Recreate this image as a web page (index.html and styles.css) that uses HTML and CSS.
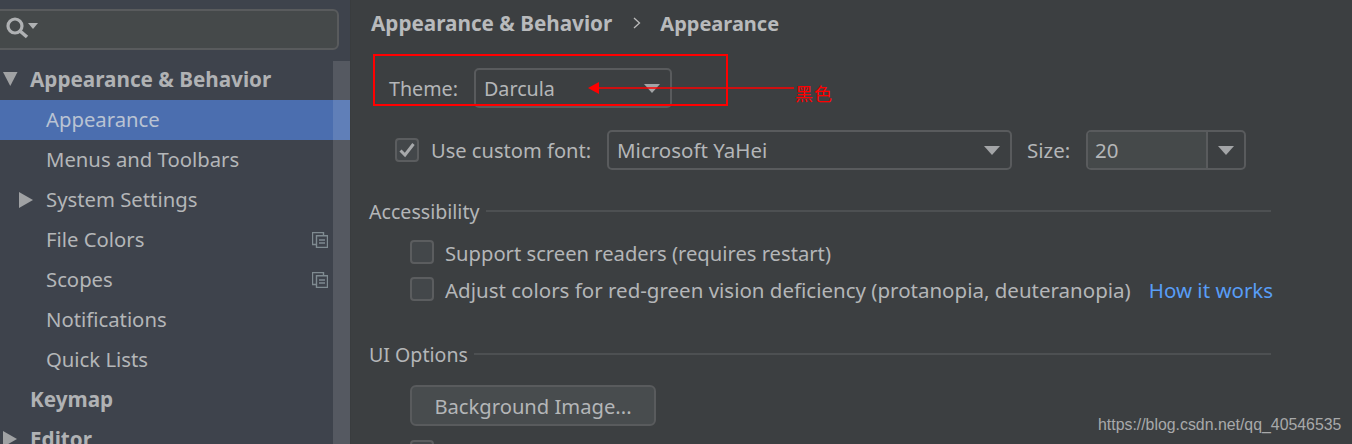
FILE: index.html
```html
<!DOCTYPE html>
<html lang="en">
<head>
<meta charset="utf-8">
<title>Settings</title>
<link rel="stylesheet" href="styles.css">
</head>
<body>
<div class="app">
  <aside class="sidebar">
    <div class="search">
      <svg class="search-icon" width="36" height="24" viewBox="0 0 36 24"><circle cx="12" cy="11" r="7" fill="none" stroke="#afb1b3" stroke-width="3.200"/><path d="M17 16l7 6" stroke="#afb1b3" stroke-width="3.600" fill="none"/><path d="M25 8h10l-5 6z" fill="#afb1b3"/></svg>
    </div>
    <div class="tree-wrap">
      <ul class="tree">
        <li class="row top"><svg class="arrow" width="16" height="14" viewBox="0 0 16 14"><path d="M1 0h14.500l-7.250 14z" fill="#a0a2a4"/></svg><span>Appearance &amp; Behavior</span></li>
        <li class="row sub selected"><span>Appearance</span></li>
        <li class="row sub"><span>Menus and Toolbars</span></li>
        <li class="row sub"><svg class="arrow-sub" width="14" height="16" viewBox="0 0 14 16"><path d="M0 0l14 8-14 8z" fill="#a0a2a4"/></svg><span>System Settings</span></li>
        <li class="row sub"><span>File Colors</span><svg class="copy" width="16" height="16" viewBox="0 0 16 16"><path d="M4.500 12.500H.5V.5h11v3" fill="none" stroke="#7f8b91" stroke-width="1.400"/><path d="M4.500 3.800h11v11.700h-11z" fill="none" stroke="#7f8b91" stroke-width="1.400"/><path d="M7 8h6M7 11h6" stroke="#7f8b91" stroke-width="1.400"/></svg></li>
        <li class="row sub"><span>Scopes</span><svg class="copy" width="16" height="16" viewBox="0 0 16 16"><path d="M4.500 12.500H.5V.5h11v3" fill="none" stroke="#7f8b91" stroke-width="1.400"/><path d="M4.500 3.800h11v11.700h-11z" fill="none" stroke="#7f8b91" stroke-width="1.400"/><path d="M7 8h6M7 11h6" stroke="#7f8b91" stroke-width="1.400"/></svg></li>
        <li class="row sub"><span>Notifications</span></li>
        <li class="row sub"><span>Quick Lists</span></li>
        <li class="row top"><span class="no-arrow">Keymap</span></li>
        <li class="row top"><svg class="arrow" width="14" height="16" viewBox="0 0 14 16"><path d="M0 0l14 8-14 8z" fill="#a0a2a4"/></svg><span>Editor</span></li>
      </ul>
      <div class="scrollbar"></div>
    </div>
  </aside>
  <main class="content">
    <h1 class="crumbs"><span>Appearance &amp; Behavior</span><svg class="chev" width="8" height="12" viewBox="0 0 8 12"><path d="M1 1l5.500 5L1 11" fill="none" stroke="#bbb" stroke-width="1.300"/></svg><span class="crumb-last">Appearance</span></h1>

    <div class="theme-row">
      <label class="label theme-label">Theme:</label>
      <div class="combo theme-combo"><span>Darcula</span><i class="caret"></i></div>
    </div>

    <div class="font-row">
      <span class="check checked"><svg width="18" height="16" viewBox="0 0 18 16"><path d="M2.500 8.500l4.500 4.500L15.500 2" fill="none" stroke="#a7a9ab" stroke-width="3"/></svg></span>
      <label class="label font-label">Use custom font:</label>
      <div class="combo font-combo"><span>Microsoft YaHei</span><i class="caret"></i></div>
      <label class="label size-label">Size:</label>
      <div class="size-combo"><span class="size-value">20</span><span class="size-btn"><i class="caret"></i></span></div>
    </div>

    <div class="group access"><span>Accessibility</span><hr></div>
    <div class="opt first"><span class="check"></span><span class="opt-text">Support screen readers (requires restart)</span></div>
    <div class="opt second"><span class="check"></span><span class="opt-text">Adjust colors for red-green vision deficiency (protanopia, deuteranopia)</span><a class="link opt-text">How it works</a></div>

    <div class="group ui"><span>UI Options</span><hr></div>
    <button class="btn">Background Image...</button>
    <div class="opt third"><span class="check"></span></div>
  </main>
</div>

<div class="mark-box"></div>
<svg class="mark-arrow" width="206" height="14" viewBox="0 0 206 14"><path d="M0 7l11-6v12z" fill="#f00"/><path d="M8 7h198" stroke="#f00" stroke-width="1.400"/></svg>
<span class="mark-text">黑色</span>
<span class="watermark">https://blog.csdn.net/qq_40546535</span>
</body>
</html>
```
FILE: styles.css
```css
* { box-sizing: border-box; }
html, body { margin: 0; height: 444px; overflow: hidden; }
body { background: #3c3f41; color: #b4b6b8; font-family: "Noto Sans", "Open Sans", sans-serif; font-size: 20.5px; position: relative; }

.app { display: flex; height: 444px; overflow: hidden; }

/* Sidebar */
.sidebar { width: 351px; flex: none; background: #3e434c; display: flex; flex-direction: column; overflow: hidden; border-right: 1px solid #393c3e; }
.search { height: 41px; margin: 9px 11px 10px -6px; background: #45494a; border: 2px solid #595b5d; border-radius: 6px; padding: 4px 0 0 7px; flex: none; }
.search-icon { display: block; }
.tree-wrap { position: relative; flex: 1; min-height: 0; }
.tree { list-style: none; margin: 0; padding: 0; }
.row { height: 40px; display: flex; align-items: center; white-space: nowrap; position: relative; padding-bottom: 2px; }
.top { font-size: 20.7px; font-weight: 700; padding-left: 2px; color: #b0b2b4; }
.top .arrow { width: 16px; margin-right: 12px; flex: none; }
.top .no-arrow { margin-left: 28px; }
.sub { padding-left: 46px; font-size: 20.3px; }
.arrow-sub { position: absolute; left: 19px; top: 12px; }
.selected { background: #4b6eaf; color: #b9c3d3; }
.copy { position: absolute; left: 312px; top: 12px; }
.scrollbar { position: absolute; top: 1px; right: 0; bottom: 0; width: 17px; background: rgba(255, 255, 255, 0.12); }

/* Main */
.content { flex: 1; min-width: 0; padding-left: 18px; overflow: hidden; }
.crumbs { margin: 0; height: 46px; font-size: 20.7px; font-weight: 700; display: flex; align-items: center; padding-left: 2px; color: #b8babc; white-space: nowrap; }
.crumb-last { font-size: 20px; }
.chev { margin: 0 19px 0 21px; }
.label { white-space: nowrap; flex: none; }
.combo { height: 40px; border: 2px solid #595b5d; border-radius: 5px; display: flex; align-items: center; justify-content: space-between; padding: 0 10px 0 8px; white-space: nowrap; flex: none; }
.caret { display: block; width: 0; height: 0; border-left: 8px solid transparent; border-right: 8px solid transparent; border-top: 9px solid #a3a5a7; flex: none; }

.theme-row { display: flex; align-items: center; margin-top: 22px; padding-left: 20px; font-size: 19.7px; }
.theme-label { width: 69px; }
.theme-combo { width: 198px; margin-left: 16px; }

.font-row { display: flex; align-items: center; margin-top: 22px; padding-left: 26px; }
.check { width: 24px; height: 24px; border: 2px solid #5b5d5f; border-radius: 4px; background: #43474a; flex: none; display: flex; align-items: center; justify-content: center; }
.font-label { margin-left: 12px; width: 161px; font-size: 20.1px; }
.font-combo { width: 405px; margin-left: 15px; }
.size-label { margin-left: 15px; width: 44px; }
.size-combo { width: 160px; height: 40px; margin-left: 15px; display: flex; border: 2px solid #595b5d; border-radius: 5px; overflow: hidden; flex: none; }
.size-value { flex: 1; background: #45494a; padding-left: 7px; line-height: 36px; }
.size-btn { width: 38px; border-left: 2px solid #595b5d; display: flex; align-items: center; justify-content: center; }

.group { display: flex; align-items: center; white-space: nowrap; height: 28px; width: 902px; font-size: 19.6px; }
.group hr { flex: 1; height: 2px; margin: 0 0 0 6px; border: 0; background: #4d5052; }
.access { margin-top: 27px; }
.ui { margin-top: 39px; }

.opt { display: flex; align-items: center; height: 24px; margin-left: 41px; white-space: nowrap; }
.opt .check { margin-right: 11px; }
.opt-text { padding-top: 2px; }
.first { margin-top: 15px; font-size: 20.2px; }
.second { margin-top: 13px; }
.third { margin-top: 14px; }
.link { color: #589df6; margin-left: 18px; }

.btn { display: block; width: 246px; height: 41px; margin: 17px 0 0 41px; padding: 0; background: #484c4e; border: 2px solid #595b5d; border-radius: 6px; color: #b4b6b8; font: inherit; font-size: 20.2px; }

/* Annotations drawn over the screenshot */
.mark-box { position: absolute; left: 373px; top: 54px; width: 355px; height: 52px; border: 2px solid #f00; }
.mark-arrow { position: absolute; left: 588px; top: 81px; }
.mark-text { position: absolute; left: 795px; top: 83px; color: #f00; font: 18px/20px "Noto Sans CJK SC", sans-serif; letter-spacing: 1px; }
.watermark { position: absolute; left: 1098px; top: 415px; font: 15.87px/20px "Liberation Sans", sans-serif; color: #a8a9aa; }
```
